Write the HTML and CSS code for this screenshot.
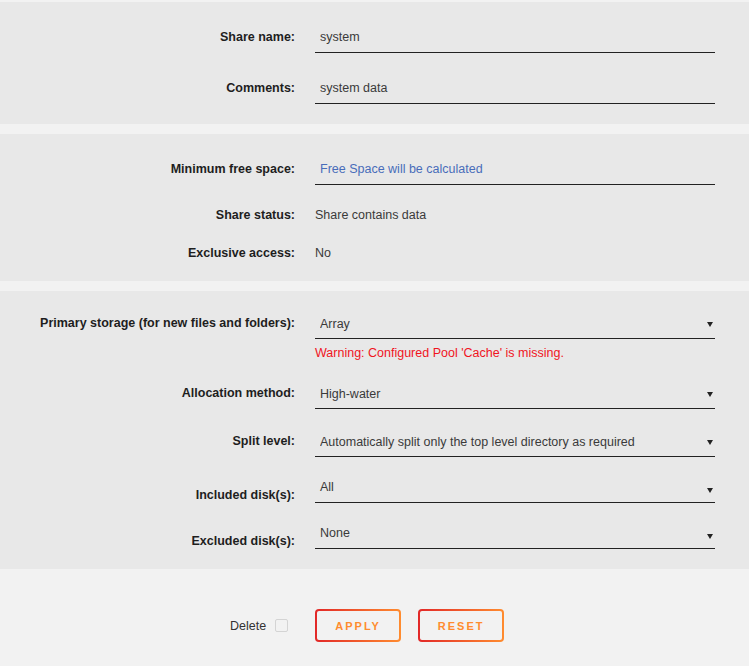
FILE: index.html
```html
<!DOCTYPE html>
<html lang="en">
<head>
    <meta charset="UTF-8">
    <meta name="viewport" content="width=device-width, initial-scale=1.0">
    <title>Share Settings</title>
    <link rel="stylesheet" href="styles.css">
</head>
<body>

<form class="share-form">
    <div class="section sec-name">
        <div class="row">
            <label class="label">Share name:</label>
            <input class="field" type="text" value="system">
        </div>
        <div class="row">
            <label class="label">Comments:</label>
            <input class="field" type="text" value="system data">
        </div>
    </div>

    <div class="section sec-space">
        <div class="row">
            <label class="label">Minimum free space:</label>
            <input class="field" type="text" placeholder="Free Space will be calculated">
        </div>
        <div class="row plain status">
            <span class="label">Share status:</span>
            <span class="value">Share contains data</span>
        </div>
        <div class="row plain access">
            <span class="label">Exclusive access:</span>
            <span class="value">No</span>
        </div>
    </div>

    <div class="section sec-storage">
        <div class="row">
            <label class="label">Primary storage (for new files and folders):</label>
            <div class="select-wrap">
                <select class="field"><option>Array</option></select>
            </div>
        </div>
        <div class="row warn-row">
            <span></span>
            <span class="warning">Warning: Configured Pool 'Cache' is missing.</span>
        </div>
        <div class="row alloc">
            <label class="label">Allocation method:</label>
            <div class="select-wrap">
                <select class="field"><option>High-water</option></select>
            </div>
        </div>
        <div class="row split">
            <label class="label">Split level:</label>
            <div class="select-wrap">
                <select class="field"><option>Automatically split only the top level directory as required</option></select>
            </div>
        </div>
        <div class="row disks">
            <label class="label low">Included disk(s):</label>
            <div class="select-wrap multi">
                <div class="field">All</div>
            </div>
        </div>
        <div class="row disks">
            <label class="label low">Excluded disk(s):</label>
            <div class="select-wrap multi">
                <div class="field">None</div>
            </div>
        </div>
    </div>

    <div class="actions">
        <label class="delete">Delete <input type="checkbox" class="check"></label>
        <button type="button" class="btn">APPLY</button>
        <button type="button" class="btn">RESET</button>
    </div>
</form>

</body>
</html>
```

FILE: styles.css
```css
body {
    margin: 0;
    background-color: #f2f2f2;
    font-family: "Liberation Sans", Arial, sans-serif;
    font-size: 12.5px;
    color: #3a3a3a;
}
.share-form {
    padding-top: 2px;
}
.section {
    background-color: #e8e8e8;
    margin-bottom: 10px;
}
.sec-name {
    padding: 19px 0 20px;
}
.sec-name .row + .row {
    margin-top: 19px;
}
.sec-space {
    padding: 19px 0 12px;
}
.sec-storage {
    padding: 16px 0 20px;
    margin-bottom: 0;
}
.row {
    display: grid;
    grid-template-columns: 295px 400px;
    column-gap: 20px;
    align-items: center;
    height: 32px;
}
.label {
    text-align: right;
    font-weight: bold;
    color: #1e1e1e;
}
.label.low {
    align-self: end;
    padding-bottom: 1px;
}
.field {
    box-sizing: border-box;
    width: 400px;
    height: 32px;
    padding: 1px 5px 0;
    border: none;
    border-bottom: 1px solid #222;
    background: transparent;
    font-family: inherit;
    font-size: 12.5px;
    color: #3a3a3a;
    outline: none;
    -webkit-appearance: none;
    appearance: none;
}
select.field {
    padding-top: 3px;
}
.field::placeholder {
    color: #486dba;
}
.status {
    margin-top: 14px;
}
.access {
    margin-top: 6px;
}
.select-wrap {
    position: relative;
}
.select-wrap::after {
    content: "";
    position: absolute;
    right: 2px;
    top: 15px;
    border-left: 3px solid transparent;
    border-right: 3px solid transparent;
    border-top: 5px solid #222;
}
.multi .field {
    display: flex;
    align-items: flex-start;
    padding-top: 9px;
}
.multi::after {
    top: 17px;
}
.warn-row {
    height: 16px;
    margin-top: 6px;
}
.warning {
    color: #f0141e;
}
.alloc {
    margin-top: 16px;
}
.split {
    margin-top: 16px;
}
.disks {
    margin-top: 14px;
}
.actions {
    display: flex;
    align-items: center;
    padding: 40px 0 24px 230px;
}
.delete {
    display: flex;
    align-items: center;
    color: #333;
}
.check {
    -webkit-appearance: none;
    appearance: none;
    width: 13px;
    height: 13px;
    margin: 0 27px 0 9px;
    border: 1px solid #d4d4d4;
    border-radius: 2px;
    background-color: #f2f2f2;
}
.btn {
    box-sizing: border-box;
    width: 86px;
    height: 33px;
    margin-right: 17px;
    border: 2px solid transparent;
    border-radius: 4px;
    background: linear-gradient(#f2f2f2, #f2f2f2) padding-box,
                linear-gradient(90deg, #e22828, #ff8c2f) border-box;
    color: #ff8c2f;
    font-family: inherit;
    font-size: 11px;
    font-weight: bold;
    letter-spacing: 2px;
    cursor: pointer;
}
```
